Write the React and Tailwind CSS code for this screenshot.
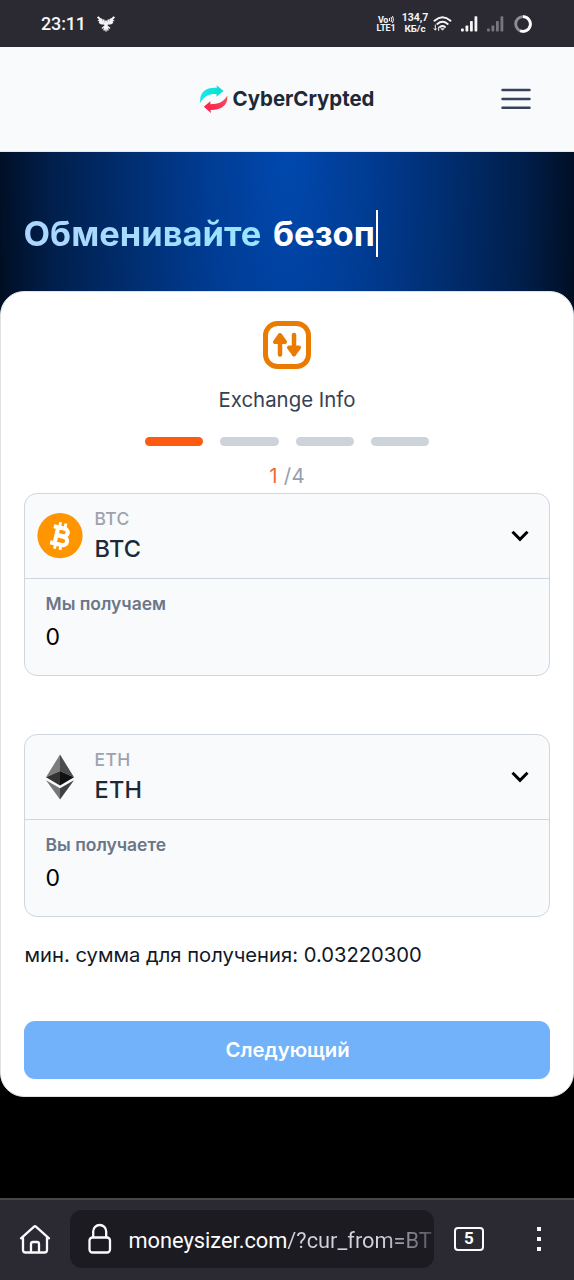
import React from 'react';

function Phoenix() {
  return (
    <svg className="ml-[11px] h-[16px] w-[18px]" viewBox="0 0 18 16" fill="none" stroke="#f4f4f6">
      <path d="M9 4.500v6M6.500 3.500c0 3 .5 4.500 2.500 6.500M11.500 3.500c0 3-.5 4.500-2.500 6.500" strokeWidth="1.900" />
      <path d="M.8.800c1 2.200 2.600 2.800 4.700 3.200M1.200 3.300c1.200 1.700 2.600 2.300 4.800 2.600M2.300 6c1.200 1.300 2.500 1.600 4.500 1.800M17.200.800c-1 2.200-2.600 2.800-4.700 3.200M16.800 3.300c-1.200 1.700-2.600 2.300-4.800 2.600M15.700 6c-1.200 1.300-2.500 1.600-4.500 1.800" strokeWidth="2.100" />
      <path d="M8.500 9.500 5 12.500M9.500 9.500l3.500 3M8.500 10.500l-1.700 4M9.500 10.500l1.700 4M9 10v5.500" strokeWidth="1.500" />
    </svg>
  );
}

function Signal({ className }) {
  return (
    <svg className={className} viewBox="0 0 17 16" fill="currentColor">
      <rect x="0" y="12.500" width="2.800" height="3" rx=".8" />
      <rect x="4.500" y="9.500" width="2.800" height="6" rx=".8" />
      <rect x="9" y="5" width="2.800" height="10.500" rx=".8" />
      <rect x="13.500" y="0.300" width="2.800" height="15.200" rx=".8" />
    </svg>
  );
}

function StatusBar() {
  return (
    <div className="flex h-[47px] shrink-0 items-center bg-[#2b2a33] pl-[41px] font-[Roboto,sans-serif] text-[#f6f6f8]">
      <span className="w-[45px] text-[18px] font-medium leading-[24px] tracking-[-0.150px]">23:11</span>
      <Phoenix />
      <div className="ml-auto flex items-center pr-[42px]">
        <div className="flex w-[20px] flex-col items-center whitespace-nowrap text-[9px] font-bold leading-[8px]">
          <span className="flex items-center gap-px text-[9px] tracking-[-0.500px]">
            Vo
            <svg className="h-[7px] w-[5px]" viewBox="0 0 5 7" fill="none" stroke="currentColor" strokeWidth="1">
              <path d="M.5 2v3M2 1q1.500 2.500 0 5M3.500 0q2 3.500 0 7" />
            </svg>
          </span>
          <span className="tracking-[-0.200px]">LTE1</span>
        </div>
        <div className="ml-[6px] flex w-[26px] flex-col items-center whitespace-nowrap text-[10.500px] font-bold leading-[10.500px]">
          <span>134,7</span>
          <span className="text-[9.800px]">КБ/с</span>
        </div>
        <svg className="ml-[5px] h-[16px] w-[19px]" viewBox="0 0 19 16" fill="none" stroke="currentColor" strokeWidth="1.900" strokeLinecap="round">
          <path d="M1.500 4.700Q9.500-2 17.500 4.700M4.300 7.900q5.200-4.300 10.400 0M7 11q2.500-2 5 0" />
          <path d="m8 12.700 1.500 1.500 1.500-1.500z" fill="currentColor" strokeWidth=".6" />
          <path d="M2.300 9v5M1 12.700l1.300 1.300 1.300-1.300M5.700 14.500v-3.500" strokeWidth="1" />
        </svg>
        <Signal className="ml-[9px] h-[16px] w-[17px]" />
        <Signal className="ml-[9px] h-[16px] w-[17px] text-[#77767e]" />
        <svg className="ml-[10px] h-[18px] w-[18px]" viewBox="0 0 18 18" fill="none" strokeWidth="2.800">
          <circle cx="9" cy="9" r="7.300" stroke="#8f8e95" />
          <path d="M9 1.700A7.300 7.300 0 1 1 6.200 15.700" stroke="#fff" />
        </svg>
      </div>
    </div>
  );
}

function Logo() {
  return (
    <svg className="h-[28px] w-[28px]" viewBox="0 0 28 28">
      <defs>
        <linearGradient id="teal" x1="0" y1="0" x2="1" y2="0">
          <stop offset="0" stopColor="#18e8ee" />
          <stop offset="1" stopColor="#0addce" />
        </linearGradient>
        <linearGradient id="red" x1="0" y1="1" x2="1" y2="0">
          <stop offset="0" stopColor="#ff1744" />
          <stop offset="1" stopColor="#f05262" />
        </linearGradient>
      </defs>
      <path d="M.300 18C-1 7 6 2 16.900 2.800L16.700.300 23.500 6l-7 5.800V9C10.500 8.500 4 10.500.300 18Z" fill="url(#teal)" />
      <path d="M27.300 10.500C28.300 20 21.500 25 10.500 25L11 28 3.800 21.800l6.500-5.500.200 2.900C18 19 23.500 17.500 27.300 10.500Z" fill="url(#red)" />
    </svg>
  );
}

function Header() {
  return (
    <header className="grid h-[105px] shrink-0 grid-cols-[1fr_auto_1fr] items-center border-b border-[#dfe8f3] bg-[#f8fafc]">
      <div className="col-start-2 flex items-center gap-[5px]">
        <Logo />
        <span className="w-[142px] whitespace-nowrap text-[20.400px] font-bold leading-[28px] text-[#1e2937]">CyberCrypted</span>
      </div>
      <button className="mr-[42px] justify-self-end" aria-label="Menu">
        <svg className="h-[24px] w-[32px]" viewBox="0 0 32 24" fill="none" stroke="#37415a" strokeWidth="2.500" strokeLinecap="round">
          <path d="M2.500 3h27M2.500 12h27M2.500 20.700h27" />
        </svg>
      </button>
    </header>
  );
}

function ExchangeIcon() {
  return (
    <svg className="h-[48px] w-[48px]" viewBox="0 0 48 48" fill="none" stroke="#e97b00" strokeLinecap="round" strokeLinejoin="round">
      <rect x="2.500" y="2.500" width="43" height="43" rx="12" strokeWidth="5" />
      <path d="M17 15v18.500M31 14v19" strokeWidth="4.500" />
      <path d="m17 14-5 7h10zM31 33.300l-5-6.800h10z" fill="#e97b00" strokeWidth="4" />
    </svg>
  );
}

function Bitcoin() {
  return (
    <svg className="h-[46px] w-[46px]" viewBox="0 0 46 46">
      <circle cx="23" cy="22.700" r="22.600" fill="#ff9500" />
      <g transform="rotate(13 23 23)" fill="none" stroke="#fff">
        <path d="M20.500 9.500v5M26 9.500v5M20.500 31.500v5M26 31.500v5" strokeWidth="2.900" />
        <path d="M14.800 14.800h10.700c5.800 0 5.800 7.700 0 7.700h-6.200M19 23h7.300c6.500 0 6.500 8.400 0 8.400H14.800M19.300 14.800v16.500" strokeWidth="4.100" />
      </g>
    </svg>
  );
}

function Ethereum() {
  return (
    <svg className="h-[46px] w-[46px]" viewBox="0 0 46 46">
      <path d="M23 .5 9 23.300l14-6.200z" fill="#7c7c7c" />
      <path d="M23 .5v16.600l14 6.200z" fill="#4c4c4c" />
      <path d="m9 23.300 14 8.200V17.100z" fill="#333" />
      <path d="m37 23.300-14 8.200V17.100z" fill="#111" />
      <path d="M9 26.200 23 45.500V34.300z" fill="#777" />
      <path d="M37 26.200 23 45.500V34.300z" fill="#414141" />
    </svg>
  );
}

function CurrencyBox({ icon, code, label }) {
  return (
    <section className="flex h-[183px] flex-col rounded-[13px] border border-[#d0d6dd] bg-[#f8fafc]">
      <div className="flex h-[85px] items-center border-b border-[#d0d6dd] pl-[12px] pr-[20px]">
        {icon}
        <div className="ml-[11.500px] flex flex-col">
          <span className="pt-px text-[17.400px] font-medium leading-[24px] tracking-[0.400px] text-[#9ca3af]">{code}</span>
          <span className="mt-px text-[23.500px] font-medium leading-[34px] tracking-[0.300px] text-[#1e2937]">{code}</span>
        </div>
        <svg className="ml-auto h-[12px] w-[18px]" viewBox="0 0 18 12" fill="none" stroke="#000" strokeWidth="3">
          <path d="m1.500 1.800 7.500 7.500 7.500-7.500" />
        </svg>
      </div>
      <div className="flex flex-col pl-[20.500px] pt-[13px]">
        <span className="text-[17.500px] font-semibold leading-[24px] text-[#6b7688]">{label}</span>
        <span className="mt-[5px] text-[23px] leading-[32px] text-black">0</span>
      </div>
    </section>
  );
}

function ExchangeCard() {
  return (
    <main className="flex h-[806px] flex-col rounded-[24px] border border-[#dfe1e5] bg-white px-[23px] pt-[29px]">
      <div className="flex flex-col items-center">
        <ExchangeIcon />
        <h2 className="mt-[16px] whitespace-nowrap text-[20.400px] leading-[30px] text-[#374151]">Exchange Info</h2>
        <div className="mt-[22px] flex gap-[17px]">
          <div className="h-[9px] w-[58.300px] rounded-full bg-[#ff5a12]" />
          <div className="h-[9px] w-[58.300px] rounded-full bg-[#cdd3da]" />
          <div className="h-[9px] w-[58.300px] rounded-full bg-[#cdd3da]" />
          <div className="h-[9px] w-[58.300px] rounded-full bg-[#cdd3da]" />
        </div>
        <p className="mt-[15px] text-[20.400px] leading-[30px] tracking-[0.300px] text-[#94a0b0]">
          <span className="text-[#f26a35]">1</span> /4
        </p>
      </div>
      <div className="mt-[2px] flex flex-col gap-[58px]">
        <CurrencyBox icon={<Bitcoin />} code="BTC" label="Мы получаем" />
        <CurrencyBox icon={<Ethereum />} code="ETH" label="Вы получаете" />
      </div>
      <p className="mt-[23px] whitespace-nowrap pl-[0.500px] text-[20.200px] leading-[30px] text-[#111827]">мин. сумма для получения: 0.03220300</p>
      <button className="mt-[51px] h-[58px] shrink-0 rounded-[11px] bg-[#72b2fb] pl-px text-[20.300px] font-semibold text-white">Следующий</button>
    </main>
  );
}

function BrowserBar() {
  return (
    <nav className="flex h-[82px] shrink-0 items-center border-t-2 border-[#46464b] bg-[#2b2a33] font-[Roboto,sans-serif] text-[#fbfbfe]">
      <svg className="mb-[3px] ml-[19px] h-[32px] w-[32px]" viewBox="0 0 32 32" fill="none" stroke="currentColor" strokeWidth="2.300" strokeLinecap="round" strokeLinejoin="round">
        <path d="m2 15.300 12.800-11.500q1.200-1 2.400 0L30 15.300M4 14v13q0 2.500 2.500 2.500h19Q28 29.500 28 27V14" />
        <path d="M12 29v-8q0-2 2-2h4q2 0 2 2v8" />
      </svg>
      <div className="mb-[2px] ml-[19px] flex h-[58px] w-[364px] items-center rounded-[12px] bg-[#1c1b22]">
        <svg className="ml-[18px] h-[32px] w-[24px] shrink-0" viewBox="0 0 24 32" fill="none" stroke="currentColor" strokeWidth="2.300">
          <rect x="1.500" y="14.500" width="20.500" height="15" rx="3" />
          <path d="M5.200 14.500V8.500a6.500 6.500 0 0 1 13 0v6" />
        </svg>
        <div className="ml-[16.500px] flex whitespace-nowrap pt-[3px] text-[21.800px] leading-[32px]">
          <span>moneysizer.com</span>
          <span className="bg-linear-to-r from-[#d2d2da] from-65% to-[#55545c] bg-clip-text text-transparent">/?cur_from=BT</span>
        </div>
      </div>
      <div className="mb-[2px] ml-[20px] flex h-[24px] w-[30px] items-center justify-center rounded-[4px] border-2 border-[#fbfbfe] text-[17px] font-bold">5</div>
      <div className="mb-[2px] ml-[53px] flex flex-col gap-[6px]">
        <i className="h-[4px] w-[4px] bg-[#fbfbfe]" />
        <i className="h-[4px] w-[4px] bg-[#fbfbfe]" />
        <i className="h-[4px] w-[4px] bg-[#fbfbfe]" />
      </div>
    </nav>
  );
}

export default function App() {
  return (
    <div className="flex h-[1280px] w-[574px] flex-col overflow-hidden bg-black font-[Inter,sans-serif]">
      <StatusBar />
      <Header />
      <div className="h-[1046px] bg-[radial-gradient(ellipse_310px_1060px_at_50%_0,#0048ae_0%,#003b91_28%,#002b69_56%,#001f4c_76%,#001027_92%,#000_100%)] bg-[length:100%_500px] bg-no-repeat">
        <div className="flex h-[139px] items-center pl-[23.500px] pt-[24px]">
          <h1 className="whitespace-nowrap text-[34.500px] font-bold leading-[46px] [word-spacing:3.500px]">
            <span className="bg-linear-to-r from-[#acd6ff] to-[#9be4ff] bg-clip-text text-transparent">Обменивайте</span>
            <span className="text-white"> безоп</span>
          </h1>
          <div className="ml-px h-[47px] w-[2.500px] bg-white" />
        </div>
        <ExchangeCard />
      </div>
      <BrowserBar />
    </div>
  );
}
